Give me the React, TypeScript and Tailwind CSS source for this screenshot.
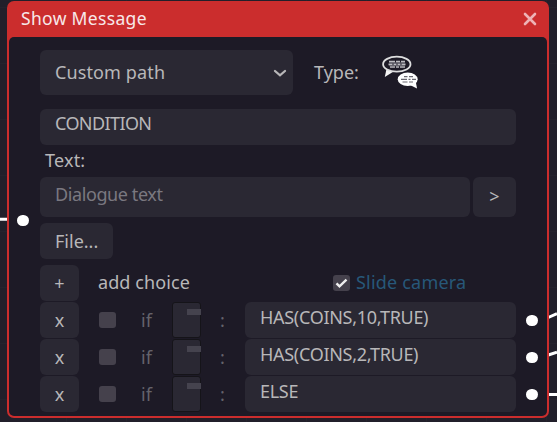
import type { ReactNode } from "react";

const choices = ["HAS(COINS,10,TRUE)", "HAS(COINS,2,TRUE)", "ELSE"];

function Field({ className = "", children }: { className?: string; children?: ReactNode }) {
  return <div className={`flex items-center rounded-md bg-[#2a2833] ${className}`}>{children}</div>;
}

function Port({ className }: { className: string }) {
  return <div className={`absolute h-[11px] w-3 rounded-full bg-white ${className}`} />;
}

function SpeechIcon() {
  return (
    <svg width="38" height="35" viewBox="0 0 38 35" className="block">
      <path d="M4.8 12.5 2.8 22l8.4-5.3z" fill="#f4f4f4" />
      <ellipse cx="14.8" cy="9.2" rx="13.7" ry="7.5" fill="#1d1a26" stroke="#dededf" strokeWidth="1.8" />
      <g stroke="#bcbbc0" strokeWidth="1.7">
        <path d="M7 6.7h6M14 6.7h4M19 6.7h4" />
        <path d="M6.5 9.3h4M11.5 9.3h3M15.5 9.3h3M19.5 9.3h4" />
        <path d="M8 12h5M14 12h3M18 12h5" />
      </g>
      <path d="M7 8h16M7 10.7h16" stroke="#77757f" strokeWidth=".9" />
      <path d="M27 29.5l8 4-1.5-8z" fill="#fff" />
      <ellipse cx="25.7" cy="24.3" rx="10" ry="6.8" fill="#fff" />
      <g stroke="#6a6871" strokeWidth="1.1">
        <path d="M22 21.6h3.5M27 21.6h4" />
        <path d="M19 24.4h6M26.5 24.4h2M30 24.4h4" />
        <path d="M20.5 27h5M27 27h4" />
      </g>
    </svg>
  );
}

export default function App() {
  return (
    <div className="relative h-[422px] w-[557px] overflow-hidden bg-[#211f2a] pt-px pl-[6.5px] font-['Noto_Sans',sans-serif] text-[18px] leading-none whitespace-nowrap text-[#b8b7b9]">
      <svg className="absolute inset-0" width="557" height="422">
        <path
          d="M0 7.5h557M0 63.5h557M0 119.5h557M0 175.5h557M0 231.5h557M0 287.5h557M0 343.5h557M0 399.5h557M66.5 0v422M126.5 0v422M186.5 0v422M246.5 0v422M306.5 0v422M366.5 0v422M426.5 0v422M486.5 0v422M546.5 0v422"
          stroke="#25232d"
        />
        <path d="M0 219.3h8M546 318.5l11-4.8M546 355.7l11-3.5M546 394.5h11" stroke="#fff" strokeWidth="3" />
      </svg>

      <div className="relative h-[417px] w-[542.5px] rounded-[7px] bg-[#cb2d2d] pr-0.5 pb-0.5 pl-[2.5px]">
        <div className="flex h-9 items-center justify-between pr-2.5 pl-3 text-[#f7e8e9]">
          <span className="text-[17.5px] tracking-[0.33px]">Show Message</span>
          <svg width="14" height="14" viewBox="0 0 14 14">
            <path d="M2 2l10 10M12 2 2 12" stroke="#eeb2b5" strokeWidth="2.6" strokeLinecap="round" />
          </svg>
        </div>

        <div className="flex h-[379px] flex-col rounded-[5px] bg-[#1d1a26] pt-[13px] pr-[31px] pl-[31px]">
          <div className="flex h-[45px] items-center">
            <Field className="h-[45px] w-[253px] justify-between pr-1.5 pl-[15px]">
              <span className="pb-0.5 tracking-[0.12px]">Custom path</span>
              <svg width="14" height="10" viewBox="0 0 14 10">
                <path d="M2 3l5 4.3L12 3" fill="none" stroke="#b8b7b9" strokeWidth="2.3" strokeLinecap="round" />
              </svg>
            </Field>
            <span className="ml-[21px] w-[68px] pb-0.5">Type:</span>
            <SpeechIcon />
          </div>

          <Field className="mt-3.5 h-9 px-[15px] pb-2">
            <span className="tracking-[-0.6px]">CONDITION</span>
          </Field>
          <div className="flex h-8 items-center pb-0.5 pl-[5px] tracking-[0.2px]">Text:</div>
          <div className="flex gap-[3px]">
            <Field className="h-10 w-[430px] px-[15px] pb-1.5 tracking-[-0.4px] text-[#7a7880]">Dialogue text</Field>
            <Field className="h-10 w-[43px] justify-center pb-0.5">&gt;</Field>
          </div>
          <Field className="mt-1.5 h-9 w-[73px] px-[15px]">File...</Field>

          <div className="mt-1.5 flex h-9 items-center">
            <Field className="h-9 w-[39px] justify-center">+</Field>
            <span className="ml-[19px] w-[235px] pb-0.5 tracking-[0.1px]">add choice</span>
            <div className="flex h-4 w-[17px] items-center justify-center rounded-[3px] bg-[#45414c]">
              <svg width="13" height="10" viewBox="0 0 13 10">
                <path d="M1.5 5.3l3 3L11.5 1.7" fill="none" stroke="#efefef" strokeWidth="2.4" />
              </svg>
            </div>
            <span className="ml-1.5 pb-0.5 tracking-[0.2px] text-[#275879]">Slide camera</span>
          </div>

          <div className="mt-px flex flex-col gap-px">
            {choices.map((text) => (
              <div key={text} className="flex h-9 items-center">
                <Field className="h-9 w-[39px] justify-center">x</Field>
                <div className="ml-5 h-4 w-[17px] rounded-[3px] bg-[#45414c]" />
                <span className="ml-[25px] w-[31px] text-[#65636b]">if</span>
                <div className="flex h-9 w-[29px] justify-end rounded-[3px] border border-[#151419] bg-[#2a2833] pt-1.5">
                  <div className="-mr-px h-1.5 w-3.5 bg-[#45434e]" />
                </div>
                <span className="ml-[19px] w-[25px] text-[#65636b]">:</span>
                <Field className="h-9 w-[271px] px-[15px] pb-1.5 tracking-[-0.3px]">{text}</Field>
              </div>
            ))}
          </div>
        </div>
      </div>

      <Port className="top-[215px] left-[17px]" />
      <Port className="top-[315px] left-[526px]" />
      <Port className="top-[352px] left-[526px]" />
      <Port className="top-[389px] left-[526px]" />
    </div>
  );
}
